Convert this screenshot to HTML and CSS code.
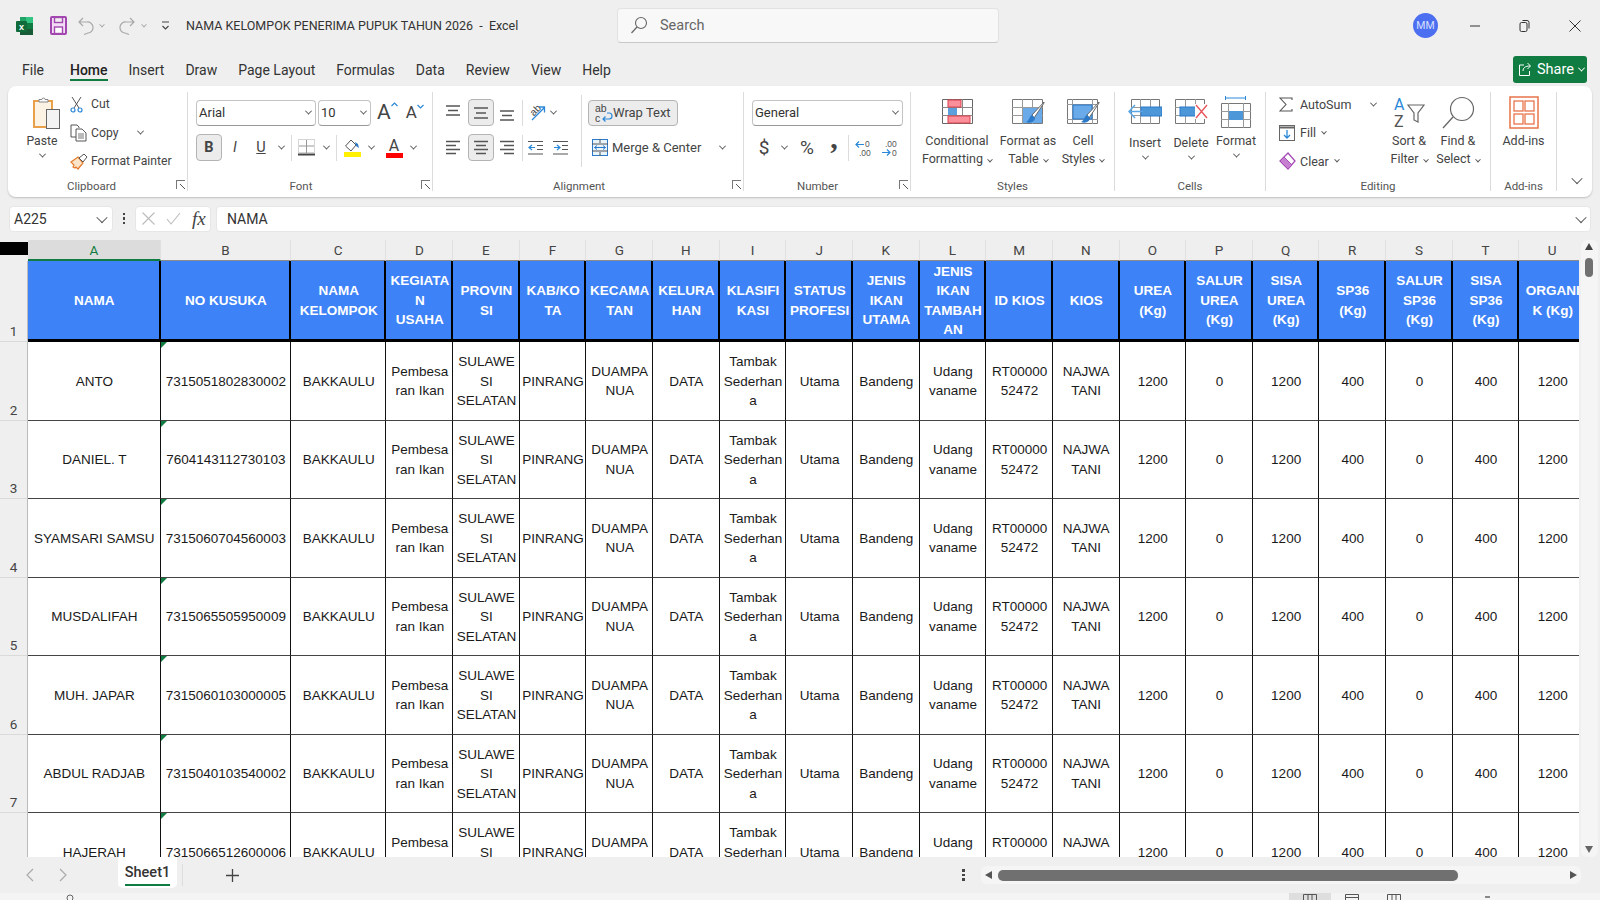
FILE: index.html
```html
<!DOCTYPE html>
<html lang="en">
<head>
    <meta charset="UTF-8">
    <meta name="viewport" content="width=device-width, initial-scale=1.0">
    <title>NAMA KELOMPOK PENERIMA PUPUK TAHUN 2026 - Excel</title>
    <link rel="stylesheet" href="styles.css">
</head>
<body>
    <div class="titlebar">
        <div class="qat">
            <svg class="q-excel" width="18" height="18" viewBox="0 0 18 18"><rect x="4" y="0" width="13" height="6" fill="#21a366"/><rect x="4" y="6" width="13" height="6" fill="#107c41"/><rect x="4" y="12" width="13" height="6" fill="#185c37"/><rect x="10" y="0" width="7" height="6" fill="#33c481"/><rect x="0" y="4" width="11" height="11" rx="1" fill="#0f6b3a"/><text x="5.5" y="13" font-size="9" font-weight="700" fill="#fff" text-anchor="middle" font-family="Liberation Sans">x</text></svg>
            <svg class="q-save" width="17" height="19" viewBox="0 0 17 19"><rect x="1" y="1" width="15" height="17" rx="1" fill="#f3dcf5" stroke="#a347b0" stroke-width="2"/><rect x="4.5" y="1.5" width="8" height="5" fill="#efefef" stroke="#a347b0" stroke-width="1.4"/><rect x="4.5" y="11" width="8" height="6.5" fill="#fff" stroke="#a347b0" stroke-width="1.4"/></svg>
            <svg class="q-undo" width="16" height="18" viewBox="0 0 16 18"><path d="M5 1 1 5l4 4M1 5h8a5.500 5.500 0 0 1 1 11l-4 1.500" fill="none" stroke="#a9a9a9" stroke-width="1.200"/></svg>
            <span class="chev q-chev faded"></span>
            <svg class="q-redo" width="16" height="18" viewBox="0 0 16 18"><path d="M11 1l4 4-4 4M15 5H7a5.500 5.500 0 0 0-1 11l4 1.500" fill="none" stroke="#a9a9a9" stroke-width="1.200"/></svg>
            <span class="chev q-chev2 faded"></span>
            <svg class="q-custom" width="9" height="10" viewBox="0 0 9 10"><path d="M1 1h7M1.500 5 4.500 8l3-3" fill="none" stroke="#444" stroke-width="1.100"/></svg>
            <span class="doc-title">NAMA KELOMPOK PENERIMA PUPUK TAHUN 2026 &nbsp;-&nbsp; Excel</span>
        </div>
        <div class="searchbox">
            <svg width="18" height="19" viewBox="0 0 18 19"><circle cx="11" cy="7" r="5.500" fill="none" stroke="#666" stroke-width="1.100"/><path d="M7 11 1.500 17" stroke="#666" stroke-width="1.200"/></svg>
            <span>Search</span>
        </div>
        <div class="window-side">
            <span class="avatar">MM</span>
            <svg class="win-btn" width="12" height="12" viewBox="0 0 12 12"><path d="M1 6h10" stroke="#333" stroke-width="1"/></svg>
            <svg class="win-btn" width="12" height="14" viewBox="0 0 12 14"><rect x="1" y="3.500" width="7" height="9" rx="1.500" fill="none" stroke="#333"/><path d="M3.500 1.500h4.500a2 2 0 0 1 2 2v6" fill="none" stroke="#333"/></svg>
            <svg class="win-btn" width="12" height="12" viewBox="0 0 12 12"><path d="M.5.500l11 11M11.500.500l-11 11" stroke="#333" stroke-width="1"/></svg>
        </div>
    </div>

    <div class="tabrow">
        <span class="tab tab-file">File</span>
        <span class="tab active">Home</span>
        <span class="tab">Insert</span>
        <span class="tab">Draw</span>
        <span class="tab">Page Layout</span>
        <span class="tab">Formulas</span>
        <span class="tab">Data</span>
        <span class="tab">Review</span>
        <span class="tab">View</span>
        <span class="tab">Help</span>
        <div class="share">
            <svg width="14" height="15" viewBox="0 0 14 15"><path d="M6 3H1.500v10.500h10V9M5 9c0-3 2-5 7-5M9.500 1 12.500 4l-3 3" fill="none" stroke="#fff" stroke-width="1"/></svg>
            <span>Share</span>
            <span class="chev white"></span>
        </div>
    </div>

    <div class="ribbon">
        <!-- Clipboard -->
        <div class="group g-clipboard">
            <div class="group-body row">
                <div class="paste">
                    <svg class="paste-icon" width="28" height="33" viewBox="0 0 28 33"><path d="M2 5h18v26H2z" fill="#fdf3e4" stroke="#e8a04a" stroke-width="2"/><path d="M7 6V3.500h3a1.500 1.500 0 0 1 3 0h3V6z" fill="#fff" stroke="#888"/><rect x="14.500" y="13.500" width="13" height="19" fill="#f3f3f3" stroke="#666"/></svg>
                    <span class="paste-text">Paste</span>
                    <span class="chev"></span>
                </div>
                <div class="small-col">
                    <div class="small-row">
                        <span class="small-ico"><svg width="13" height="17" viewBox="0 0 13 17"><path d="M2 1l7 11M11 1 4 12" stroke="#555" fill="none"/><circle cx="3" cy="14" r="2" fill="none" stroke="#2b88d8" stroke-width="1.200"/><circle cx="10" cy="14" r="2" fill="none" stroke="#2b88d8" stroke-width="1.200"/></svg></span>
                        <span>Cut</span>
                    </div>
                    <div class="small-row">
                        <span class="small-ico"><svg width="18" height="18" viewBox="0 0 18 18"><path d="M6 13H1V1h6l2 2v1" fill="#fff" stroke="#555"/><path d="M6 5h6l4 4v8H6z" fill="#fff" stroke="#555"/><path d="M8 10h6M8 12h6M8 14h6" stroke="#777"/></svg></span>
                        <span>Copy</span>
                        <span class="chev copy-chev"></span>
                    </div>
                    <div class="small-row">
                        <span class="small-ico"><svg width="18" height="18" viewBox="0 0 18 18"><path d="M1 10l7-5 5 6-5 6-2-2-1 1-2-1 1-2z" fill="#fbe4c7" stroke="#e2792b" stroke-width="1.200"/><path d="M9 6l5-4 3 3-4 5z" fill="#fff" stroke="#555"/></svg></span>
                        <span>Format Painter</span>
                    </div>
                </div>
            </div>
            <div class="group-label">Clipboard</div>
            <span class="launcher"></span>
        </div>

        <!-- Font -->
        <div class="group g-font">
            <div class="group-body col">
                <div class="tool-row">
                    <div class="select sel-font"><span>Arial</span><span class="chev"></span></div>
                    <div class="select sel-size"><span>10</span><span class="chev"></span></div>
                    <span class="grow-a big-a">A<svg width="7" height="5" viewBox="0 0 7 5"><path d="M.5 4 3.500 1l3 3" fill="none" stroke="#2b88d8" stroke-width="1.200"/></svg></span>
                    <span class="grow-a small-a">A<svg width="7" height="5" viewBox="0 0 7 5"><path d="M.5 1l3 3 3-3" fill="none" stroke="#2b88d8" stroke-width="1.200"/></svg></span>
                </div>
                <div class="tool-row">
                    <span class="tool w26 pressed bold-b">B</span>
                    <span class="tool w26 italic-i">I</span>
                    <span class="tool w26 under-u">U</span>
                    <span class="drop w14"><span class="chev"></span></span>
                    <span class="sep s1"></span>
                    <span class="tool w22"><svg width="17" height="17" viewBox="0 0 17 17"><path d="M.5.500h16v13H.5z" fill="none" stroke="#aaa" stroke-dasharray="1 1"/><path d="M8.500 1v13M1 7h15" stroke="#999"/><path d="M0 15.500h17" stroke="#444" stroke-width="2"/></svg></span>
                    <span class="drop w18"><span class="chev"></span></span>
                    <span class="sep s2"></span>
                    <span class="tool w26 fill-tool"><svg width="17" height="18" viewBox="0 0 17 18"><path d="M7 1 1.500 7 7 12l5-6z" fill="#fff" stroke="#555"/><path d="M11 3l3 2 1 4-3-2" fill="#2b79c9"/><rect y="13" width="17" height="5" fill="#ffef00"/></svg></span>
                    <span class="drop w12"><span class="chev"></span></span>
                    <span class="tool w34 color-a"><span>A</span><i></i></span>
                    <span class="drop w4"><span class="chev"></span></span>
                </div>
            </div>
            <div class="group-label">Font</div>
            <span class="launcher"></span>
        </div>

        <!-- Alignment -->
        <div class="group g-align">
            <div class="group-body row">
                <div class="col align-icons">
                    <div class="tool-row">
                        <span class="tool w26 top-ico"><svg width="16" height="16" viewBox="0 0 16 16"><path d="M1 1h14M3 5.500h10M1 10h14" stroke="#555" stroke-width="1.300"/></svg></span>
                        <span class="tool w26 pressed ml2"><svg width="16" height="16" viewBox="0 0 16 16"><path d="M1 3h14M3 8h10M1 13h14" stroke="#555" stroke-width="1.300"/></svg></span>
                        <span class="tool w26 bot-ico"><svg width="16" height="16" viewBox="0 0 16 16"><path d="M1 6h14M3 10.500h10M1 15h14" stroke="#555" stroke-width="1.300"/></svg></span>
                        <span class="sep s3"></span>
                        <span class="tool w24"><svg width="20" height="20" viewBox="0 0 20 20"><text x="5" y="13" font-size="10" fill="#444" font-family="Liberation Sans" transform="rotate(-45 7 10)">ab</text><path d="M6 17 18 5M13 4h5.500v5.500" fill="none" stroke="#2b88d8" stroke-width="1.300"/></svg></span>
                        <span class="drop w10"><span class="chev"></span></span>
                    </div>
                    <div class="tool-row">
                        <span class="tool w26"><svg width="16" height="16" viewBox="0 0 16 16"><path d="M1 1.500h14M1 5.500h10M1 9.500h14M1 13.500h10" stroke="#555" stroke-width="1.300"/></svg></span>
                        <span class="tool w26 pressed ml2"><svg width="16" height="16" viewBox="0 0 16 16"><path d="M1 1.500h14M3 5.500h10M1 9.500h14M3 13.500h10" stroke="#555" stroke-width="1.300"/></svg></span>
                        <span class="tool w26"><svg width="16" height="16" viewBox="0 0 16 16"><path d="M1 1.500h14M5 5.500h10M1 9.500h14M5 13.500h10" stroke="#555" stroke-width="1.300"/></svg></span>
                        <span class="sep s3"></span>
                        <span class="tool w24"><svg width="16" height="16" viewBox="0 0 16 16"><path d="M0 1.500h15M9 5.500h6M9 9.500h6M0 14h15" stroke="#555" stroke-width="1.200"/><path d="M1 7.500h6M4 5 1 7.500 4 10" fill="none" stroke="#2b88d8" stroke-width="1.200"/></svg></span>
                        <span class="tool w26"><svg width="16" height="16" viewBox="0 0 16 16"><path d="M0 1.500h15M9 5.500h6M9 9.500h6M0 14h15" stroke="#555" stroke-width="1.200"/><path d="M1 7.500h6M4 5l3 2.500L4 10" fill="none" stroke="#2b88d8" stroke-width="1.200"/></svg></span>
                    </div>
                </div>
                <span class="sep-tall"></span>
                <div class="col">
                    <div class="tool-row">
                        <span class="wrap-btn pressed">
                            <svg width="18" height="20" viewBox="0 0 18 20"><text x="0" y="9" font-size="10.500" fill="#444" font-family="Liberation Sans">ab</text><text x="0" y="19" font-size="10.500" fill="#444" font-family="Liberation Sans">c</text><path d="M12 10h2a2.500 2.500 0 0 1 0 6H8M10.500 13.500 8 16l2.500 2.500" fill="none" stroke="#2b88d8" stroke-width="1.200"/></svg>
                            <span>Wrap Text</span>
                        </span>
                    </div>
                    <div class="tool-row merge-row">
                        <svg width="16" height="17" viewBox="0 0 16 17"><rect x=".5" y=".5" width="15" height="16" fill="#e9f3fb" stroke="#2b79c9"/><path d="M0 5h16M0 12h16M8 0v4M8 13v4" stroke="#555"/><path d="M2.500 8.500h11M5 6.500l-2.500 2 2.500 2M11 6.500l2.500 2-2.500 2" fill="none" stroke="#2b79c9"/></svg>
                        <span>Merge &amp; Center</span>
                        <span class="chev merge-chev"></span>
                    </div>
                </div>
            </div>
            <div class="group-label">Alignment</div>
            <span class="launcher"></span>
        </div>

        <!-- Number -->
        <div class="group g-number">
            <div class="group-body col">
                <div class="tool-row">
                    <div class="select sel-general"><span>General</span><span class="chev"></span></div>
                </div>
                <div class="tool-row">
                    <span class="tool w24 num-sym">$</span>
                    <span class="drop w16"><span class="chev"></span></span>
                    <span class="tool w30 num-sym">%</span>
                    <span class="tool w24 comma-sym">,</span>
                    <span class="sep s4"></span>
                    <svg class="dec-one" width="17" height="18" viewBox="0 0 17 18"><text x="10" y="8" font-size="8.500" fill="#555" font-family="Liberation Sans">0</text><text x="4" y="17" font-size="8.500" fill="#555" font-family="Liberation Sans">.00</text><path d="M1 5.500h8M4 2.500l-3 3 3 3" fill="none" stroke="#2b88d8" stroke-width="1.200"/></svg>
                    <svg class="dec-two" width="18" height="18" viewBox="0 0 18 18"><text x="4" y="8" font-size="8.500" fill="#555" font-family="Liberation Sans">.00</text><text x="11" y="17" font-size="8.500" fill="#555" font-family="Liberation Sans">0</text><path d="M1 13.500h8M6 10.500l3 3-3 3" fill="none" stroke="#2b88d8" stroke-width="1.200"/></svg>
                </div>
            </div>
            <div class="group-label">Number</div>
            <span class="launcher"></span>
        </div>

        <!-- Styles -->
        <div class="group g-styles">
            <div class="group-body row">
                <div class="big w72">
                    <div class="big-icon">
                        <svg width="31" height="25" viewBox="0 0 31 25"><path d="M.5.500h30v24H.5z" fill="#fff" stroke="#666"/><path d="M0 8.500h31M0 16.500h31M10.500 0v25M20.500 0v25" stroke="#888"/><rect x="6" y="1" width="13" height="7" fill="#fb8f9a" stroke="#d9434f"/><rect x="6" y="9" width="9" height="7" fill="#5b9fdc"/><rect x="6" y="17" width="22" height="7" fill="#fb8f9a" stroke="#d9434f"/></svg>
                    </div>
                    <span>Conditional</span>
                    <span>Formatting <i class="chev"></i></span>
                </div>
                <div class="big w70">
                    <div class="big-icon">
                        <svg width="33" height="30" viewBox="0 0 33 30"><path d="M.5.500h30v24H.5z" fill="#fff" stroke="#777"/><path d="M0 8.500h31M0 16.500h31M10.500 0v25M20.500 0v25" stroke="#999"/><rect x="11" y="9" width="19" height="15" fill="#6aaae8"/><path d="M32 3 20 16l2 3L32 4z" fill="#fff" stroke="#666"/><path d="M20 16c-3 1-2 5-6 7 5 2 9-1 9-4z" fill="#2b79c9"/></svg>
                    </div>
                    <span>Format as</span>
                    <span>Table <i class="chev"></i></span>
                </div>
                <div class="big w40">
                    <div class="big-icon">
                        <svg width="33" height="30" viewBox="0 0 33 30"><path d="M.5.500h30v24H.5z" fill="#fff" stroke="#777"/><path d="M0 5.500h31M0 20.500h31M5.500 0v25M25.500 0v25" stroke="#999"/><rect x="6" y="6" width="19" height="14" fill="#6aaae8" stroke="#2b79c9"/><path d="M32 3 20 16l2 3L32 4z" fill="#fff" stroke="#666"/><path d="M20 16c-3 1-2 5-6 7 5 2 9-1 9-4z" fill="#2b79c9"/></svg>
                    </div>
                    <span>Cell</span>
                    <span>Styles <i class="chev"></i></span>
                </div>
            </div>
            <div class="group-label">Styles</div>
        </div>

        <!-- Cells -->
        <div class="group g-cells">
            <div class="group-body row">
                <div class="big w46 cell-btn">
                    <div class="big-icon">
                        <svg width="34" height="25" viewBox="0 0 34 25"><path d="M3.500.500h28v24h-28z" fill="#fff" stroke="#777"/><path d="M3 8.500h29M3 16.500h29M12.500 0v25M22.500 0v25" stroke="#999"/><rect x="13" y="8" width="21" height="9" fill="#4d97d9" stroke="#2b79c9"/><path d="M1 12.500h14M7 6l-6 6.500L7 19" fill="none" stroke="#5aa7e6" stroke-width="1.500"/></svg>
                    </div>
                    <span>Insert</span>
                    <span class="big-drop"><i class="chev"></i></span>
                </div>
                <div class="big w46 cell-btn">
                    <div class="big-icon">
                        <svg width="33" height="25" viewBox="0 0 33 25"><path d="M.5.500h29v24H.5z" fill="#fff" stroke="#777"/><path d="M0 8.500h30M0 16.500h30M10.500 0v25M20.500 0v25" stroke="#999"/><rect x="5" y="8" width="16" height="9" fill="#4d97d9" stroke="#2b79c9"/><rect x="20" y="5" width="13" height="15" fill="#fff"/><path d="M21 6l11 13M32 6 21 19" stroke="#e8525a" stroke-width="1.300"/></svg>
                    </div>
                    <span>Delete</span>
                    <span class="big-drop"><i class="chev"></i></span>
                </div>
                <div class="big w44">
                    <div class="big-icon up">
                        <svg width="30" height="32" viewBox="0 0 30 32"><path d="M4 2h21M4.500 0v4M24.500 0v4" stroke="#2b88d8" fill="none"/><path d="M.5 7.500h29v24H.5z" fill="#fff" stroke="#777"/><path d="M0 15.500h30M0 23.500h30M7.500 7v25M22.500 7v25" stroke="#999"/><rect x="8" y="15" width="14" height="9" fill="#4d97d9"/></svg>
                    </div>
                    <span>Format</span>
                    <span class="big-drop"><i class="chev"></i></span>
                </div>
            </div>
            <div class="group-label">Cells</div>
        </div>

        <!-- Editing -->
        <div class="group g-editing">
            <div class="group-body row">
                <div class="small-col edit-col">
                    <div class="small-row">
                        <span class="small-ico"><svg width="14" height="15" viewBox="0 0 14 15"><path d="M13 3V1H1l6 6.500L1 14h12v-2" fill="none" stroke="#555" stroke-width="1.100"/></svg></span>
                        <span>AutoSum</span>
                        <span class="chev sum-chev"></span>
                    </div>
                    <div class="small-row">
                        <span class="small-ico"><svg width="16" height="16" viewBox="0 0 16 16"><rect x=".5" y=".5" width="15" height="15" fill="#fff" stroke="#666"/><path d="M0 2.500h16" stroke="#666" stroke-width="2"/><path d="M8 5v8M5 10l3 3 3-3" fill="none" stroke="#2b88d8" stroke-width="1.300"/></svg></span>
                        <span>Fill</span>
                        <span class="chev after-text"></span>
                    </div>
                    <div class="small-row">
                        <span class="small-ico"><svg width="17" height="18" viewBox="0 0 17 18"><path d="M9 1l7 8-7 8-8-8z" fill="#fff" stroke="#a54cb5" stroke-width="1.300"/><path d="M1 9l4-4 8 8-4 4z" fill="#c77fd1" stroke="#a54cb5"/></svg></span>
                        <span>Clear</span>
                        <span class="chev after-text"></span>
                    </div>
                </div>
                <div class="big w50">
                    <div class="big-icon up">
                        <svg width="31" height="33" viewBox="0 0 31 33"><text x="0" y="14" font-size="16" fill="#2b88d8" font-family="Roboto">A</text><text x="0" y="31" font-size="16" fill="#555" font-family="Roboto">Z</text><path d="M14 9h16l-6 8v9l-4-2v-7z" fill="#fff" stroke="#666" stroke-width="1.200"/></svg>
                    </div>
                    <span>Sort &amp;</span>
                    <span>Filter <i class="chev"></i></span>
                </div>
                <div class="big w48">
                    <div class="big-icon up">
                        <svg width="33" height="33" viewBox="0 0 33 33"><circle cx="20" cy="13" r="11.500" fill="#fff" stroke="#666" stroke-width="1.200"/><path d="M11 21 1 32" stroke="#666" stroke-width="1.300"/></svg>
                    </div>
                    <span>Find &amp;</span>
                    <span>Select <i class="chev"></i></span>
                </div>
            </div>
            <div class="group-label">Editing</div>
        </div>

        <!-- Add-ins -->
        <div class="group g-addins">
            <div class="group-body row">
                <div class="big wfull">
                    <div class="big-icon up">
                        <svg width="30" height="33" viewBox="0 0 30 33"><rect x="1" y="1" width="28" height="31" fill="#fff" stroke="#e8744a" stroke-width="1.500"/><rect x="5" y="5" width="9" height="10" fill="#fff" stroke="#e8744a" stroke-width="1.300"/><rect x="16" y="5" width="9" height="10" fill="#fff" stroke="#e8744a" stroke-width="1.300"/><rect x="5" y="18" width="9" height="10" fill="#fff" stroke="#e8744a" stroke-width="1.300"/><rect x="16" y="18" width="9" height="10" fill="#fff" stroke="#e8744a" stroke-width="1.300"/></svg>
                    </div>
                    <span>Add-ins</span>
                </div>
            </div>
            <div class="group-label">Add-ins</div>
        </div>
        <div class="collapse"><span class="chev big-chev"></span></div>
    </div>

    <div class="formulabar">
        <div class="namebox"><span>A225</span><span class="chev big-chev"></span></div>
        <div class="fdots"><i></i><i></i><i></i></div>
        <div class="fxbox">
            <svg width="13" height="13" viewBox="0 0 13 13"><path d="M.5.500l12 12M12.500.500l-12 12" stroke="#bbb" stroke-width="1.100"/></svg>
            <svg width="15" height="13" viewBox="0 0 15 13"><path d="M1 7l4 5L14 1" fill="none" stroke="#bbb" stroke-width="1.100"/></svg>
            <span class="fx">fx</span>
        </div>
        <div class="finput"><span>NAMA</span><span class="chev big-chev"></span></div>
    </div>

    <div class="workarea">
        <div class="sheet-clip">
            <div class="sheet">
                <div class="corner"><i></i></div>
                <div class="ch sel">A</div><div class="ch">B</div><div class="ch">C</div><div class="ch">D</div><div class="ch">E</div><div class="ch">F</div><div class="ch">G</div><div class="ch">H</div><div class="ch">I</div><div class="ch">J</div><div class="ch">K</div><div class="ch">L</div><div class="ch">M</div><div class="ch">N</div><div class="ch">O</div><div class="ch">P</div><div class="ch">Q</div><div class="ch">R</div><div class="ch">S</div><div class="ch">T</div><div class="ch">U</div>

                <div class="rh">1</div>
                <div class="hc">NAMA</div><div class="hc">NO KUSUKA</div><div class="hc">NAMA<br>KELOMPOK</div><div class="hc">KEGIATA<br>N<br>USAHA</div><div class="hc">PROVIN<br>SI</div><div class="hc">KAB/KO<br>TA</div><div class="hc">KECAMA<br>TAN</div><div class="hc">KELURA<br>HAN</div><div class="hc">KLASIFI<br>KASI</div><div class="hc">STATUS<br>PROFESI</div><div class="hc">JENIS<br>IKAN<br>UTAMA</div><div class="hc">JENIS<br>IKAN<br>TAMBAH<br>AN</div><div class="hc">ID KIOS</div><div class="hc">KIOS</div><div class="hc">UREA<br>(Kg)</div><div class="hc">SALUR<br>UREA<br>(Kg)</div><div class="hc">SISA<br>UREA<br>(Kg)</div><div class="hc">SP36<br>(Kg)</div><div class="hc">SALUR<br>SP36<br>(Kg)</div><div class="hc">SISA<br>SP36<br>(Kg)</div><div class="hc">ORGANI<br>K (Kg)</div>

                <div class="rh">2</div>
                <div class="dc">ANTO</div><div class="dc flag">7315051802830002</div><div class="dc">BAKKAULU</div><div class="dc">Pembesa<br>ran Ikan</div><div class="dc">SULAWE<br>SI<br>SELATAN</div><div class="dc">PINRANG</div><div class="dc">DUAMPA<br>NUA</div><div class="dc">DATA</div><div class="dc">Tambak<br>Sederhan<br>a</div><div class="dc">Utama</div><div class="dc">Bandeng</div><div class="dc">Udang<br>vaname</div><div class="dc">RT00000<br>52472</div><div class="dc">NAJWA<br>TANI</div><div class="dc">1200</div><div class="dc">0</div><div class="dc">1200</div><div class="dc">400</div><div class="dc">0</div><div class="dc">400</div><div class="dc">1200</div>

                <div class="rh">3</div>
                <div class="dc">DANIEL. T</div><div class="dc flag">7604143112730103</div><div class="dc">BAKKAULU</div><div class="dc">Pembesa<br>ran Ikan</div><div class="dc">SULAWE<br>SI<br>SELATAN</div><div class="dc">PINRANG</div><div class="dc">DUAMPA<br>NUA</div><div class="dc">DATA</div><div class="dc">Tambak<br>Sederhan<br>a</div><div class="dc">Utama</div><div class="dc">Bandeng</div><div class="dc">Udang<br>vaname</div><div class="dc">RT00000<br>52472</div><div class="dc">NAJWA<br>TANI</div><div class="dc">1200</div><div class="dc">0</div><div class="dc">1200</div><div class="dc">400</div><div class="dc">0</div><div class="dc">400</div><div class="dc">1200</div>

                <div class="rh">4</div>
                <div class="dc">SYAMSARI SAMSU</div><div class="dc flag">7315060704560003</div><div class="dc">BAKKAULU</div><div class="dc">Pembesa<br>ran Ikan</div><div class="dc">SULAWE<br>SI<br>SELATAN</div><div class="dc">PINRANG</div><div class="dc">DUAMPA<br>NUA</div><div class="dc">DATA</div><div class="dc">Tambak<br>Sederhan<br>a</div><div class="dc">Utama</div><div class="dc">Bandeng</div><div class="dc">Udang<br>vaname</div><div class="dc">RT00000<br>52472</div><div class="dc">NAJWA<br>TANI</div><div class="dc">1200</div><div class="dc">0</div><div class="dc">1200</div><div class="dc">400</div><div class="dc">0</div><div class="dc">400</div><div class="dc">1200</div>

                <div class="rh">5</div>
                <div class="dc">MUSDALIFAH</div><div class="dc flag">7315065505950009</div><div class="dc">BAKKAULU</div><div class="dc">Pembesa<br>ran Ikan</div><div class="dc">SULAWE<br>SI<br>SELATAN</div><div class="dc">PINRANG</div><div class="dc">DUAMPA<br>NUA</div><div class="dc">DATA</div><div class="dc">Tambak<br>Sederhan<br>a</div><div class="dc">Utama</div><div class="dc">Bandeng</div><div class="dc">Udang<br>vaname</div><div class="dc">RT00000<br>52472</div><div class="dc">NAJWA<br>TANI</div><div class="dc">1200</div><div class="dc">0</div><div class="dc">1200</div><div class="dc">400</div><div class="dc">0</div><div class="dc">400</div><div class="dc">1200</div>

                <div class="rh">6</div>
                <div class="dc">MUH. JAPAR</div><div class="dc flag">7315060103000005</div><div class="dc">BAKKAULU</div><div class="dc">Pembesa<br>ran Ikan</div><div class="dc">SULAWE<br>SI<br>SELATAN</div><div class="dc">PINRANG</div><div class="dc">DUAMPA<br>NUA</div><div class="dc">DATA</div><div class="dc">Tambak<br>Sederhan<br>a</div><div class="dc">Utama</div><div class="dc">Bandeng</div><div class="dc">Udang<br>vaname</div><div class="dc">RT00000<br>52472</div><div class="dc">NAJWA<br>TANI</div><div class="dc">1200</div><div class="dc">0</div><div class="dc">1200</div><div class="dc">400</div><div class="dc">0</div><div class="dc">400</div><div class="dc">1200</div>

                <div class="rh">7</div>
                <div class="dc">ABDUL RADJAB</div><div class="dc flag">7315040103540002</div><div class="dc">BAKKAULU</div><div class="dc">Pembesa<br>ran Ikan</div><div class="dc">SULAWE<br>SI<br>SELATAN</div><div class="dc">PINRANG</div><div class="dc">DUAMPA<br>NUA</div><div class="dc">DATA</div><div class="dc">Tambak<br>Sederhan<br>a</div><div class="dc">Utama</div><div class="dc">Bandeng</div><div class="dc">Udang<br>vaname</div><div class="dc">RT00000<br>52472</div><div class="dc">NAJWA<br>TANI</div><div class="dc">1200</div><div class="dc">0</div><div class="dc">1200</div><div class="dc">400</div><div class="dc">0</div><div class="dc">400</div><div class="dc">1200</div>

                <div class="rh">8</div>
                <div class="dc">HAJERAH</div><div class="dc flag">7315066512600006</div><div class="dc">BAKKAULU</div><div class="dc">Pembesa<br>ran Ikan</div><div class="dc">SULAWE<br>SI<br>SELATAN</div><div class="dc">PINRANG</div><div class="dc">DUAMPA<br>NUA</div><div class="dc">DATA</div><div class="dc">Tambak<br>Sederhan<br>a</div><div class="dc">Utama</div><div class="dc">Bandeng</div><div class="dc">Udang<br>vaname</div><div class="dc">RT00000<br>52472</div><div class="dc">NAJWA<br>TANI</div><div class="dc">1200</div><div class="dc">0</div><div class="dc">1200</div><div class="dc">400</div><div class="dc">0</div><div class="dc">400</div><div class="dc">1200</div>
            </div>
        </div>
        <div class="vscroll">
            <span class="arrow-up"></span>
            <span class="vthumb"></span>
            <span class="arrow-down"></span>
        </div>
    </div>

    <div class="sheetbar">
        <svg class="nav-left" width="8" height="14" viewBox="0 0 8 14"><path d="M7 1 1 7l6 6" fill="none" stroke="#aaa" stroke-width="1.200"/></svg>
        <svg class="nav-right" width="8" height="14" viewBox="0 0 8 14"><path d="M1 1l6 6-6 6" fill="none" stroke="#aaa" stroke-width="1.200"/></svg>
        <div class="sheet-tab"><span>Sheet1</span></div>
        <span class="tab-sep"></span>
        <svg class="add-sheet" width="13" height="13" viewBox="0 0 13 13"><path d="M6.500 0v13M0 6.500h13" stroke="#444" stroke-width="1.300"/></svg>
        <div class="bar-dots"><i></i><i></i><i></i></div>
        <div class="hscroll">
            <span class="arrow-left"></span>
            <span class="hthumb"></span>
            <span class="arrow-right"></span>
        </div>
    </div>

    <div class="statusbar">
        <svg class="st-macro" width="10" height="7" viewBox="0 0 10 7"><circle cx="5" cy="5" r="3" fill="none" stroke="#666"/></svg>
        <div class="view-btn on"><svg width="14" height="7" viewBox="0 0 14 7"><path d="M.5 7V1.500h13V7M5 2v5M9 2v5" fill="none" stroke="#555"/></svg></div>
        <div class="view-btn"><svg width="14" height="7" viewBox="0 0 14 7"><path d="M.5 7V1.500h13V7M0 4.500h14" fill="none" stroke="#555"/></svg></div>
        <div class="view-btn"><svg width="14" height="7" viewBox="0 0 14 7"><path d="M.5 7V1.500h13V7M5 2v5M9 2v5" fill="none" stroke="#555"/></svg></div>
        <span class="st-zoom"></span>
    </div>
</body>
</html>
```

FILE: styles.css
```css
* {
    box-sizing: border-box;
}

body {
    margin: 0;
    width: 1600px;
    height: 900px;
    overflow: hidden;
    background-color: #efefef;
    font-family: Roboto, "Noto Sans", sans-serif;
    font-size: 12.5px;
    color: #444;
}

i {
    font-style: normal;
}

/* little shapes used all over the ribbon */
.chev {
    display: inline-block;
    flex: none;
    width: 5px;
    height: 5px;
    border-right: 1.2px solid #555;
    border-bottom: 1.2px solid #555;
    transform: rotate(45deg) translate(-1px, -1px);
}

.chev.faded {
    border-color: #aaa;
}

.chev.white {
    border-color: #fff;
}

.chev.big-chev {
    width: 8px;
    height: 8px;
}

/* title bar */
.titlebar {
    display: flex;
    height: 50px;
    padding-top: 8px;
}

.qat {
    display: flex;
    align-items: center;
    flex: none;
    width: 617px;
    height: 35px;
    padding-left: 16px;
}

.q-save {
    margin-left: 16px;
}

.q-undo {
    margin-left: 11px;
}

.q-chev {
    margin-left: 6px;
    width: 4px;
    height: 4px;
}

.q-chev2 {
    margin-left: 7px;
    width: 4px;
    height: 4px;
}

.q-redo {
    margin-left: 15px;
}

.q-custom {
    margin-left: 15px;
}

.doc-title {
    margin-left: 16px;
    font-size: 12.5px;
    color: #333;
    white-space: nowrap;
}

.searchbox {
    display: flex;
    align-items: center;
    gap: 12px;
    flex: none;
    width: 382px;
    height: 35px;
    padding-left: 12px;
    background-color: #f8f8f8;
    border: 1px solid #e2e2e2;
    border-bottom-color: #c8c8c8;
    border-radius: 4px;
    font-size: 14.5px;
    color: #666;
}

.window-side {
    display: flex;
    align-items: center;
    flex: 1;
    height: 35px;
    padding-left: 414px;
}

.avatar {
    display: flex;
    align-items: center;
    justify-content: center;
    flex: none;
    width: 25px;
    height: 25px;
    border-radius: 50%;
    background-color: #4c6ef0;
    color: #d8e0ff;
    font-size: 10.5px;
}

.win-btn {
    flex: none;
    margin-left: 38px;
}

.win-btn:nth-child(2) {
    margin-left: 31px;
}

/* tabs */
.tabrow {
    display: flex;
    align-items: center;
    height: 36px;
    padding-left: 22px;
    padding-top: 4px;
    font-size: 14px;
    color: #333;
}

.tab {
    position: relative;
    margin-right: 21px;
    white-space: nowrap;
}

.tab-file {
    margin-right: 26px;
}

.tab.active {
    font-weight: 500;
    color: #222;
}

.tab.active::after {
    content: "";
    position: absolute;
    left: 0;
    right: 0;
    bottom: -3px;
    height: 2px;
    background-color: #107c41;
}

.share {
    display: flex;
    align-items: center;
    gap: 5px;
    flex: none;
    width: 74px;
    height: 27px;
    margin-left: auto;
    margin-right: 13px;
    margin-top: -1px;
    padding-left: 5px;
    background-color: #107c41;
    border-radius: 3px;
    font-size: 14.5px;
    color: #fff;
}

/* ribbon */
.ribbon {
    display: flex;
    width: 1584px;
    height: 111px;
    margin-left: 8px;
    background-color: #fff;
    border-radius: 8px;
    box-shadow: 0 1px 2px rgba(0, 0, 0, 0.2);
}

.group {
    position: relative;
    display: flex;
    flex-direction: column;
    flex: none;
    height: 99px;
    margin-top: 6px;
    border-right: 1px solid #dcdcdc;
}

.g-clipboard {
    width: 180px;
    padding-left: 16px;
    font-size: 12.2px;
}

.g-font {
    width: 245px;
    padding-left: 8px;
}

.g-align {
    width: 311px;
    padding-left: 7px;
}

.g-number {
    width: 167px;
    padding-left: 8px;
}

.g-styles {
    width: 204px;
    padding-left: 10px;
}

.g-cells {
    width: 151px;
    padding-left: 7px;
}

.g-editing {
    width: 225px;
    padding-left: 13px;
}

.g-addins {
    width: 66px;
}

.group-body {
    flex: 1;
    min-height: 0;
}

.row {
    display: flex;
}

.col {
    display: flex;
    flex-direction: column;
}

.group-body.col,
.col {
    gap: 8px;
    padding-top: 7px;
}

.group-label {
    height: 12px;
    margin-left: -8px;
    line-height: 14px;
    text-align: center;
    font-size: 11.5px;
    color: #555;
}

/* groups with a launcher have their label pushed left of it */
.g-clipboard .group-label {
    margin-left: -16px;
    padding-right: 12px;
}

.g-font .group-label {
    padding-right: 18px;
}

.g-align .group-label {
    margin-left: -7px;
    padding-right: 18px;
}

.g-number .group-label {
    padding-right: 19px;
}

.g-styles .group-label {
    margin-left: -10px;
}

.g-cells .group-label {
    margin-left: -7px;
}

.g-editing .group-label {
    margin-left: -13px;
}

.g-addins .group-label {
    margin-left: 0;
}

.launcher {
    position: absolute;
    right: 2px;
    bottom: 2px;
    width: 9px;
    height: 9px;
    border-top: 1px solid #777;
    border-left: 1px solid #777;
    background: linear-gradient(45deg, transparent 42%, #555 42%, #555 58%, transparent 58%) no-repeat 3px 3px / 6px 6px;
}

/* clipboard */
.paste {
    display: flex;
    flex-direction: column;
    align-items: center;
    flex: none;
    width: 36px;
    padding-top: 4px;
}

.paste-icon {
    flex: none;
    margin-left: 7px;
}

.paste-text {
    margin-top: 3px;
    line-height: 18px;
}

.paste .chev {
    margin-top: 3px;
}

.small-col {
    display: flex;
    flex-direction: column;
    flex: none;
    gap: 4.5px;
    margin-left: 10px;
}

.small-row {
    display: flex;
    align-items: center;
    height: 24px;
}

.small-ico {
    display: flex;
    align-items: center;
    flex: none;
    width: 21px;
}

.copy-chev {
    margin-left: 20px;
}

/* font + number tools */
.tool-row {
    display: flex;
    align-items: center;
    height: 27px;
}

.select {
    display: flex;
    align-items: center;
    justify-content: space-between;
    height: 26px;
    padding: 0 4px 0 2px;
    background-color: #fff;
    border: 1px solid #c4c4c4;
    border-bottom-color: #999;
    border-radius: 4px;
    font-size: 13px;
    color: #333;
}

.sel-font {
    width: 120px;
}

.sel-size {
    width: 53px;
    margin-left: 2px;
}

.sel-general {
    width: 151px;
}

.grow-a {
    display: flex;
    align-items: flex-start;
    color: #444;
    line-height: 1;
}

.big-a {
    margin-left: 6px;
    font-size: 21px;
}

.small-a {
    margin-left: 8px;
    font-size: 17px;
}

.tool {
    display: flex;
    align-items: center;
    justify-content: center;
    flex: none;
    height: 27px;
    color: #444;
}

.pressed {
    background-color: #ececec;
    border: 1px solid #b4b4b4;
    border-radius: 4px;
}

.w4 { width: 4px; }
.w10 { width: 10px; }
.w12 { width: 12px; }
.w14 { width: 14px; }
.w16 { width: 16px; }
.w18 { width: 18px; }
.w22 { width: 22px; }
.w24 { width: 24px; }
.w26 { width: 26px; }
.w30 { width: 30px; }
.w34 { width: 34px; }
.w40 { width: 40px; }
.w44 { width: 44px; }
.w46 { width: 46px; }
.w48 { width: 48px; }
.w50 { width: 50px; }
.w70 { width: 70px; }
.w72 { width: 72px; }
.wfull { width: 100%; }

.ml2 {
    margin-left: 2px;
}

.drop {
    display: flex;
    align-items: center;
    justify-content: center;
    flex: none;
    height: 27px;
}

.sep {
    flex: none;
    width: 1px;
    height: 26px;
    background-color: #dcdcdc;
}

.s1 {
    margin: 0 3px;
}

.s2 {
    margin: 0 2px 0 1px;
}

.s3 {
    margin: 0 1px 0 2px;
}

.s4 {
    margin: 0 6px 0 2px;
}

.bold-b {
    font-weight: 700;
    font-size: 14.5px;
}

.italic-i {
    font-style: italic;
    font-size: 14.5px;
}

.under-u {
    text-decoration: underline;
    font-size: 14.5px;
}

.color-a {
    flex-direction: column;
    font-size: 16px;
    line-height: 15px;
}

.color-a i {
    display: block;
    width: 17px;
    height: 5px;
    background-color: #f00;
}

.align-icons {
    width: 135px;
    flex: none;
}

.sep-tall {
    flex: none;
    width: 1px;
    height: 72px;
    margin: 3px 6px 0;
    background-color: #dcdcdc;
}

.wrap-btn {
    display: flex;
    align-items: center;
    gap: 0;
    width: 90px;
    height: 26px;
    padding-left: 6px;
    font-size: 13px;
    white-space: nowrap;
}

.merge-row {
    gap: 4px;
    padding-left: 4px;
    font-size: 13px;
    white-space: nowrap;
}

.merge-chev {
    margin-left: 15px;
}

.num-sym {
    font-size: 19px;
}

.comma-sym {
    font-size: 30px;
    font-weight: 700;
    font-family: "Liberation Serif", serif;
    align-items: flex-start;
    line-height: 8px;
}

.dec-two {
    margin-left: 9px;
}

/* big buttons */
.big {
    display: flex;
    flex-direction: column;
    align-items: center;
    flex: none;
    line-height: 18px;
    white-space: nowrap;
    color: #444;
}

.big .chev {
    width: 4px;
    height: 4px;
    margin-left: 2px;
}

.big-icon {
    display: flex;
    justify-content: center;
    flex: none;
    height: 40px;
    padding-top: 7px;
}

.big-icon.up {
    padding-top: 4px;
}

.cell-btn .big-icon {
    height: 42px;
}

.big-drop {
    display: flex;
    justify-content: center;
    padding-top: 3px;
}

.big-drop .chev {
    width: 5px;
    height: 5px;
    margin-left: 0;
}

.edit-col {
    width: 105px;
    margin-left: 0;
}

.sum-chev {
    margin-left: 20px;
}

.after-text {
    width: 4px;
    height: 4px;
    margin-left: 6px;
}

.collapse {
    display: flex;
    align-items: flex-end;
    flex: 1;
    padding: 0 0 13px 16px;
}

/* formula bar */
.formulabar {
    display: flex;
    align-items: center;
    height: 43px;
    padding: 0 9px;
    font-size: 14px;
    color: #333;
}

.namebox,
.fxbox,
.finput {
    display: flex;
    align-items: center;
    height: 26px;
    background-color: #fff;
    border: 1px solid #e6e6e6;
    border-radius: 4px;
}

.namebox {
    justify-content: space-between;
    flex: none;
    width: 104px;
    padding: 0 6px 0 4px;
}

.fdots {
    display: flex;
    flex-direction: column;
    gap: 2px;
    flex: none;
    width: 22px;
    align-items: center;
}

.fdots i {
    width: 2.5px;
    height: 2.5px;
    background-color: #444;
}

.fxbox {
    gap: 11px;
    flex: none;
    width: 76px;
    padding-left: 6px;
}

.fx {
    font-family: "Liberation Serif", serif;
    font-style: italic;
    font-size: 19px;
    line-height: 1;
    color: #444;
}

.finput {
    justify-content: space-between;
    flex: 1;
    margin-left: 5px;
    padding: 0 5px 0 10px;
}

/* the sheet */
.workarea {
    display: flex;
    height: 617px;
}

.sheet-clip {
    flex: none;
    width: 1578.6px;
    height: 617px;
    overflow: hidden;
}

.sheet {
    display: grid;
    grid-template-columns: 28px 132.7px 130.3px 95.5px repeat(18, 66.65px);
    grid-template-rows: 21px 81px repeat(7, 78.5px);
    width: max-content;
    background-color: #fff;
    font-family: "Liberation Sans", Arial, sans-serif;
    font-size: 13.5px;
    line-height: 19.5px;
}

.corner {
    padding-top: 2px;
    background-color: #efefef;
}

.corner i {
    display: block;
    height: 13px;
    background-color: #000;
}

.ch {
    display: flex;
    align-items: center;
    justify-content: center;
    padding-top: 2px;
    background-color: #efefef;
    border-right: 1px solid #e0e0e0;
    border-bottom: 1px solid #8a8a8a;
    font-family: Roboto, sans-serif;
    font-size: 13.5px;
    color: #444;
}

.ch.sel {
    background-color: #dcdcdc;
    border-bottom: 2px solid #107c41;
    color: #107c41;
}

.rh {
    display: flex;
    align-items: flex-end;
    justify-content: center;
    padding-bottom: 2px;
    background-color: #efefef;
    border-bottom: 1px solid #dadada;
    border-right: 1px solid #bbb;
    font-family: Roboto, sans-serif;
    font-size: 13.5px;
    line-height: 16px;
    color: #444;
}

.hc,
.dc {
    display: flex;
    align-items: center;
    justify-content: center;
    padding-top: 1px;
    text-align: center;
    white-space: nowrap;
    overflow: hidden;
}

.hc {
    background-color: #3d82f7;
    border-right: 2px solid #000;
    border-bottom: 3px solid #000;
    padding-left: 2px;
    font-weight: 700;
    color: #fff;
}

.dc {
    position: relative;
    border-right: 1px solid #111;
    border-bottom: 1px solid #444;
    padding-left: 1px;
    color: #1a1a1a;
}

.flag::before {
    content: "";
    position: absolute;
    left: 0;
    top: 0;
    border-top: 6px solid #107c41;
    border-right: 6px solid transparent;
}

/* scrollbars */
.vscroll {
    display: flex;
    flex-direction: column;
    align-items: center;
    flex: 1;
    margin-left: 2px;
    margin-right: 2px;
    padding: 3px 0;
    background-color: #f5f5f5;
    border-radius: 6px;
}

.arrow-up {
    border-left: 4px solid transparent;
    border-right: 4px solid transparent;
    border-bottom: 7px solid #444;
}

.vthumb {
    width: 8px;
    height: 19px;
    margin-top: 8px;
    background-color: #707070;
    border-radius: 4px;
}

.arrow-down {
    margin-top: auto;
    border-left: 4px solid transparent;
    border-right: 4px solid transparent;
    border-top: 7px solid #666;
    margin-bottom: 1px;
}

.sheetbar {
    display: flex;
    align-items: center;
    height: 36px;
    padding-left: 26px;
}

.nav-right {
    margin-left: 25px;
}

.sheet-tab {
    display: flex;
    justify-content: center;
    align-self: flex-start;
    flex: none;
    width: 59px;
    height: 31px;
    margin-left: 51px;
    padding-top: 6px;
    background-color: #fff;
    border-radius: 0 0 5px 5px;
    font-size: 14.5px;
    font-weight: 500;
    color: #333;
}

.sheet-tab span {
    height: 23px;
    border-bottom: 2px solid #107c41;
    line-height: 20px;
}

.tab-sep {
    width: 1px;
    height: 22px;
    margin-left: 5px;
    background-color: #ddd;
}

.add-sheet {
    margin-left: 43px;
}

.bar-dots {
    display: flex;
    flex-direction: column;
    gap: 2px;
    margin-left: 723px;
}

.bar-dots i {
    width: 2.5px;
    height: 2.5px;
    background-color: #444;
}

.hscroll {
    display: flex;
    align-items: center;
    flex: none;
    width: 600px;
    height: 18px;
    margin-left: 16px;
    padding: 0 4px;
    border-radius: 6px;
    background-color: #f5f5f5;
}

.arrow-left {
    border-top: 4px solid transparent;
    border-bottom: 4px solid transparent;
    border-right: 7px solid #555;
}

.hthumb {
    width: 460px;
    height: 11px;
    margin-left: 6px;
    background-color: #707070;
    border-radius: 5px;
}

.arrow-right {
    margin-left: auto;
    border-top: 4px solid transparent;
    border-bottom: 4px solid transparent;
    border-left: 7px solid #555;
}

.statusbar {
    display: flex;
    height: 7px;
    overflow: hidden;
    background-color: #f4f4f4;
}

.st-macro {
    margin-left: 65px;
}

.view-btn {
    display: flex;
    justify-content: center;
    flex: none;
    width: 42px;
    height: 7px;
}

.view-btn.on {
    margin-left: 1214px;
    background-color: #dedede;
}

.st-zoom {
    width: 5px;
    height: 2px;
    margin-left: 70px;
    margin-top: 3px;
    background-color: #888;
}
```
